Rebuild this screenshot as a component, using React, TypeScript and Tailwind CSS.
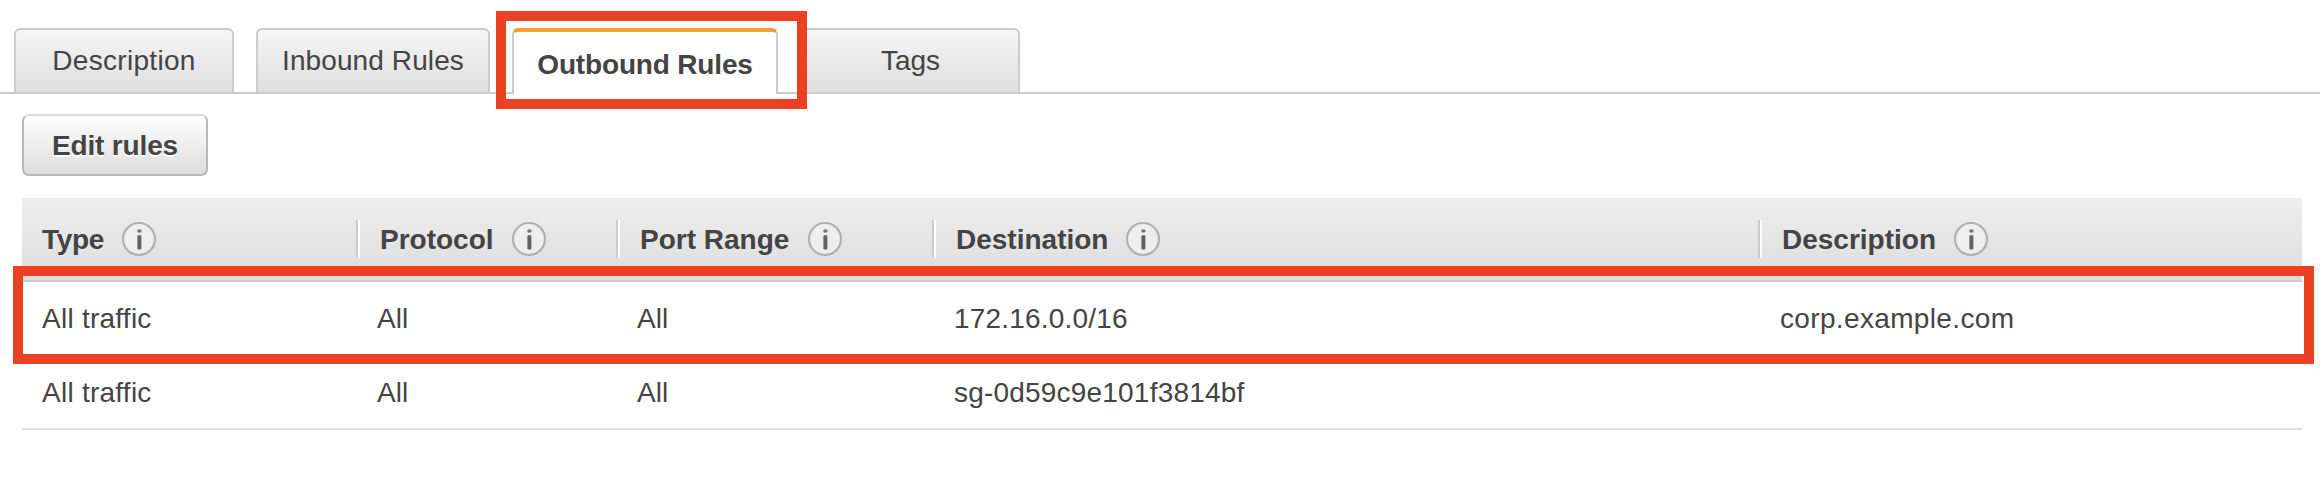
import React from "react";

function InfoIcon() {
  return (
    <svg className="h-9 w-9 shrink-0" viewBox="0 0 36 36" fill="none">
      <circle cx="18" cy="18" r="16" fill="#eeeeee" stroke="#b0b0b0" strokeWidth="2.2" />
      <rect x="16.4" y="8.4" width="4" height="3.2" rx="1" fill="#707070" />
      <rect x="16.4" y="14.2" width="4" height="14.2" rx="0.8" fill="#626262" />
    </svg>
  );
}

const inactiveTab =
  "h-[66px] shrink-0 rounded-t-[6px] border-2 border-[#cccccc] bg-linear-to-b from-[#f5f5f5] to-[#dfdfdf] text-center leading-[32px] pt-[15px]";

function Tabs() {
  return (
    <div className="flex h-[66px]">
      <div className="mt-16 h-0.5 w-[14px] shrink-0 bg-[#cccccc]" />
      <div className={`${inactiveTab} w-[220px] tracking-[0.3px]`}>Description</div>
      <div className="mt-16 h-0.5 w-[22px] shrink-0 bg-[#cccccc]" />
      <div className={`${inactiveTab} w-[234px] tracking-[0.1px]`}>Inbound Rules</div>
      <div className="mt-16 h-0.5 w-[22px] shrink-0 bg-[#cccccc]" />
      <div className="relative h-[66px] w-[266px] shrink-0">
        <div className="h-full overflow-hidden rounded-t-[6px] border-x-2 border-t-4 border-x-[#cccccc] border-t-[#f89c33] bg-white pt-[17px] text-center font-bold leading-[32px] tracking-[-0.17px]">
          Outbound Rules
        </div>
        <div className="absolute -left-4 -top-[17px] h-[98px] w-[311px] border-[10px] border-[#ec4024]" />
      </div>
      <div className="mt-16 h-0.5 w-[22px] shrink-0 bg-[#cccccc]" />
      <div className={`${inactiveTab} w-[220px] pl-px`}>Tags</div>
      <div className="mt-16 h-0.5 grow bg-[#cccccc]" />
    </div>
  );
}

const grid = "grid grid-cols-[334px_260px_316px_826px_544px]";
const headers = [
  { label: "Type", spacing: "gap-[17px] tracking-[-0.3px]" },
  { label: "Protocol", spacing: "gap-[17px]" },
  { label: "Port Range", spacing: "gap-[18px]" },
  { label: "Destination", spacing: "gap-[17px]" },
  { label: "Description", spacing: "gap-[17px]" },
];
const rows = [
  ["All traffic", "All", "All", "172.16.0.0/16", "corp.example.com"],
  ["All traffic", "All", "All", "sg-0d59c9e101f3814bf", ""],
];
const cellStyles = [
  "pl-5 tracking-[0.25px]",
  "pl-[21px]",
  "pl-[21px]",
  "pl-[22px] tracking-[0.2px]",
  "pl-[22px] tracking-[0.35px]",
];

function RulesTable() {
  return (
    <div className="relative mt-[22px] ml-[22px] w-[2280px]">
      <div className={`${grid} h-[84px] border-b-2 border-[#cccccc] bg-linear-to-b from-[#eeeeee] to-[#dddddd]`}>
        {headers.map((h, i) => (
          <div key={h.label} className="flex pt-[22px]">
            {i > 0 && (
              <div className="flex h-[38px]">
                <div className="w-0.5 bg-[#cccccc]" />
                <div className="w-0.5 bg-white" />
              </div>
            )}
            <div className={`flex h-[38px] items-center pl-5 font-bold ${h.spacing}`}>
              <span className="pt-0.5 leading-[32px]">{h.label}</span>
              <InfoIcon />
            </div>
          </div>
        ))}
      </div>
      {rows.map((r, n) => (
        <div
          key={n}
          className={`${grid} h-[74px] pt-[21px] ${n === rows.length - 1 ? "border-b-2 border-[#e0e0e0]" : ""}`}
        >
          {r.map((c, i) => (
            <div key={i} className={`leading-[32px] ${cellStyles[i]}`}>
              {c}
            </div>
          ))}
        </div>
      ))}
      <div className="absolute -left-[9px] top-[68px] h-[98px] w-[2301px] border-[10px] border-[#ec4024]" />
    </div>
  );
}

export default function App() {
  return (
    <div className="h-[486px] w-[2320px] overflow-hidden bg-white pt-7 font-['Liberation_Sans',Arial,sans-serif] text-[28px] text-[#444444]">
      <Tabs />
      <button className="mt-5 ml-[22px] block h-[62px] w-[186px] rounded-[7px] border-2 border-[#b8b8b8] border-t-[#dddddd] bg-linear-to-b from-white to-[#dddddd] pt-0.5 font-bold leading-[32px] tracking-[-0.15px] text-shadow-[0_2px_1px_#ffffff]">
        Edit rules
      </button>
      <RulesTable />
    </div>
  );
}
